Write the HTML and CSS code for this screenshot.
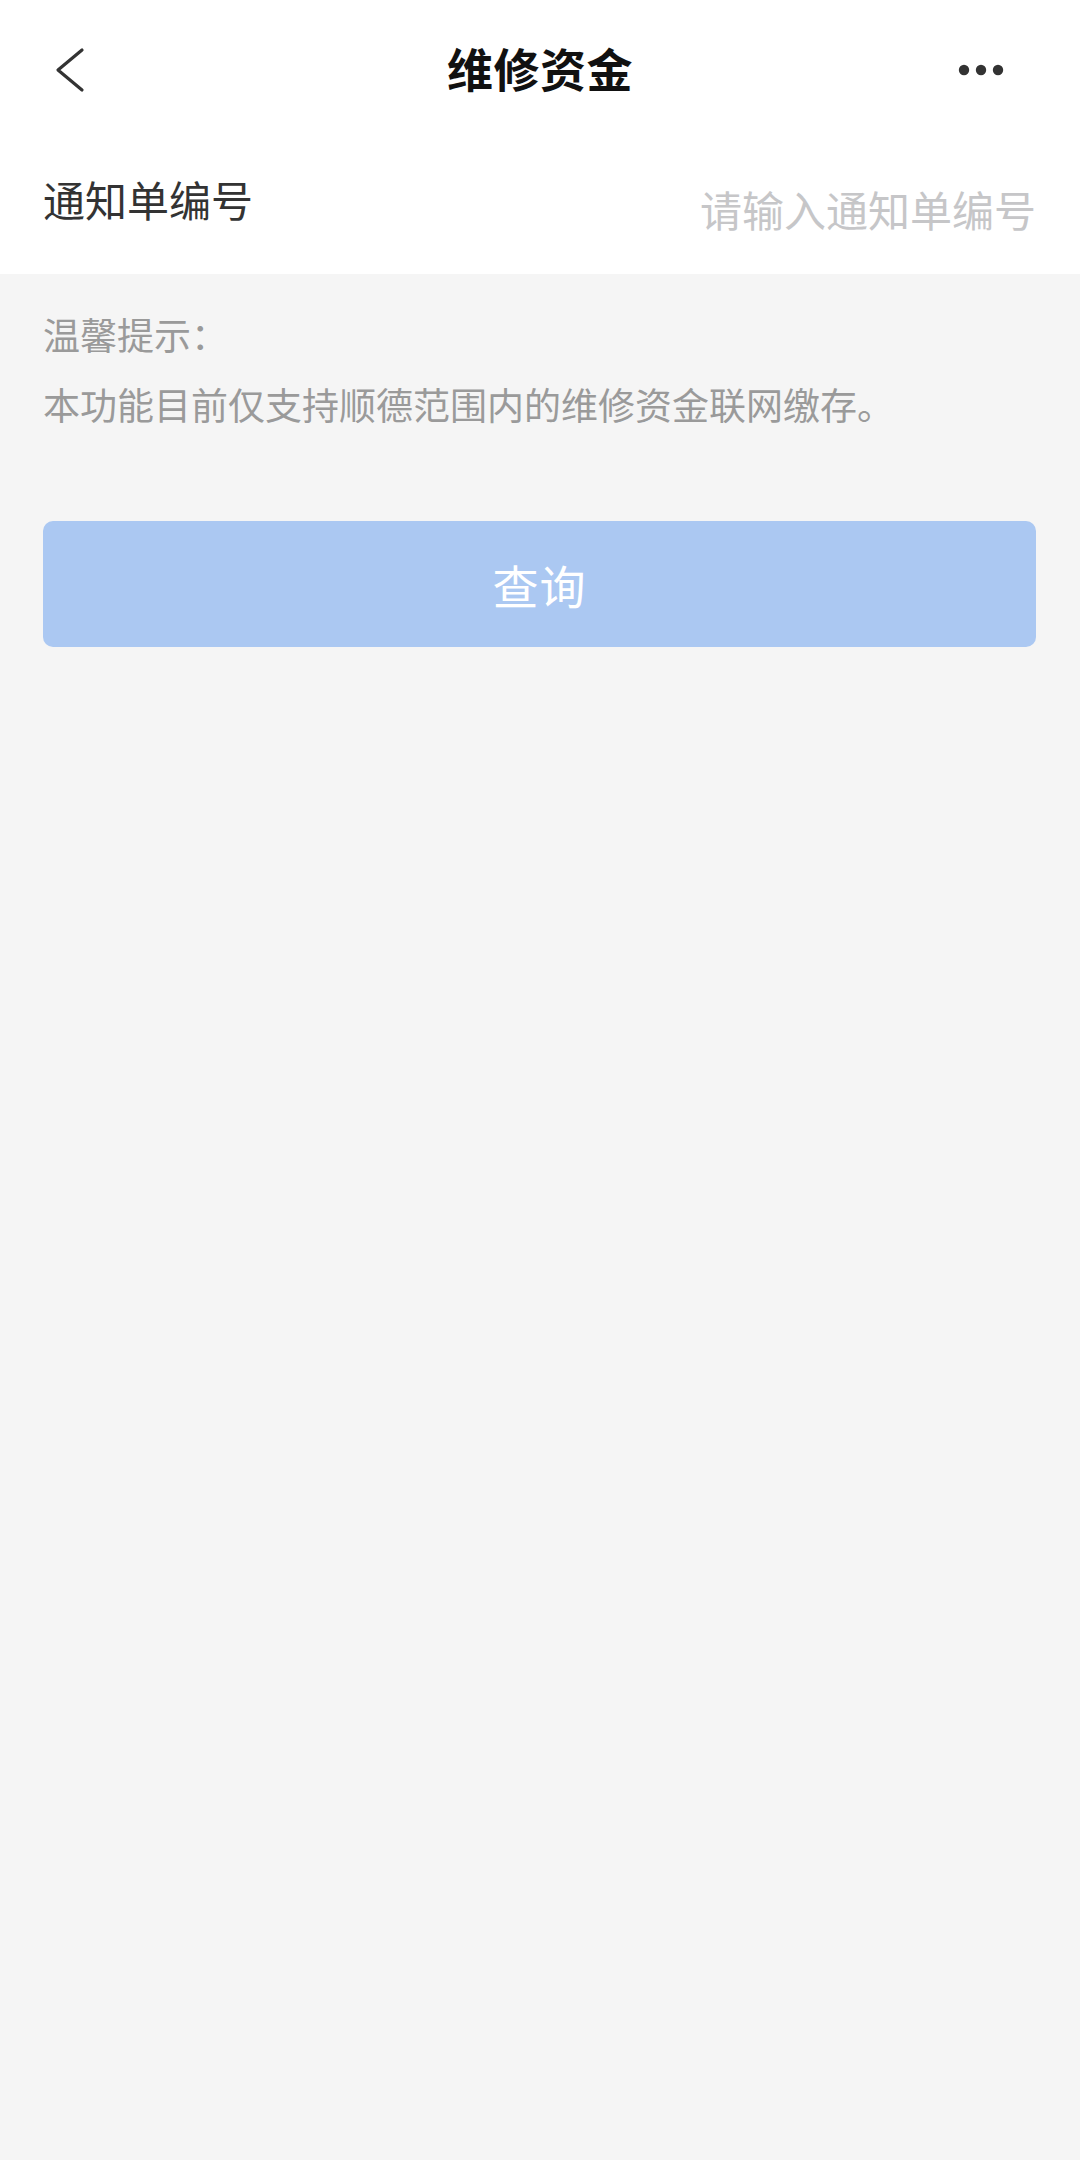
FILE: index.html
```html
<!DOCTYPE html>
<html lang="zh-CN">
<head>
    <meta charset="UTF-8">
    <meta name="viewport" content="width=device-width, initial-scale=1.0">
    <title>维修资金</title>
    <link rel="stylesheet" href="styles.css">
</head>
<body>
    <div class="page">
        <div class="top">
            <div class="nav">
                <div class="nav-left">
                    <svg class="back" width="32" height="48" viewBox="0 0 32 48">
                        <polyline points="27,4 3,24 27,44" fill="none" stroke="#333" stroke-width="3.2" stroke-linecap="round" stroke-linejoin="round"/>
                    </svg>
                </div>
                <div class="nav-title">维修资金</div>
                <div class="nav-right">
                    <svg class="more" width="46" height="12" viewBox="0 0 46 12">
                        <circle cx="6" cy="6" r="5.2" fill="#333"/>
                        <circle cx="23" cy="6" r="5.2" fill="#333"/>
                        <circle cx="40" cy="6" r="5.2" fill="#333"/>
                    </svg>
                </div>
            </div>

            <div class="field">
                <label for="notice" class="field-label">通知单编号</label>
                <input type="text" id="notice" class="field-input" placeholder="请输入通知单编号">
            </div>
        </div>

        <div class="tips">
            <p class="tips-title">温馨提示：</p>
            <p class="tips-text">本功能目前仅支持顺德范围内的维修资金联网缴存。</p>
        </div>

        <button type="button" class="btn-query">查询</button>
    </div>
</body>
</html>
```

FILE: styles.css
```css
/* base */
html, body {
    margin: 0;
    padding: 0;
}

body {
    background: #f5f5f5;
    font-family: "Noto Sans CJK SC", "Noto Sans", sans-serif;
    min-height: 2160px;
}

.page {
    width: 1080px;
}

/* white top part: nav bar + input row */
.top {
    background: #ffffff;
    height: 274px;
}

.nav {
    height: 140px;
    display: grid;
    grid-template-columns: 1fr auto 1fr;
    align-items: center;
}

.nav-left {
    padding-left: 55px;
    display: flex;
    align-items: center;
}

.nav-title {
    font-size: 46px;
    font-weight: bold;
    color: #111111;
    line-height: 56px;
    letter-spacing: 0.5px;
    margin-bottom: 6px;
}

.nav-right {
    display: flex;
    justify-content: flex-end;
    padding-right: 76px;
}

.field {
    height: 134px;
    box-sizing: border-box;
    padding: 34px 44px 0 43px;
    display: flex;
    align-items: flex-start;
}

.field-label {
    font-size: 42px;
    line-height: 50px;
    color: #333333;
    white-space: nowrap;
}

.field-input {
    flex: 1;
    margin-top: 10px;
    border: none;
    outline: none;
    padding: 0;
    background: transparent;
    text-align: right;
    font-family: inherit;
    font-size: 42px;
    line-height: 50px;
    height: 50px;
    color: #333333;
}

.field-input::placeholder {
    color: #c6c6c8;
}

/* tips */
.tips {
    padding: 25px 43px 0 43px;
}

.tips p {
    margin: 0;
    line-height: 70px;
    color: #9a9a9a;
    font-size: 37px;
}

/* button */
.btn-query {
    display: block;
    width: 993px;
    height: 126px;
    margin: 82px 0 0 43px;
    border: none;
    border-radius: 10px;
    background: #abc8f2;
    color: #ffffff;
    font-family: inherit;
    font-size: 46px;
    letter-spacing: 1px;
    cursor: pointer;
}
```
